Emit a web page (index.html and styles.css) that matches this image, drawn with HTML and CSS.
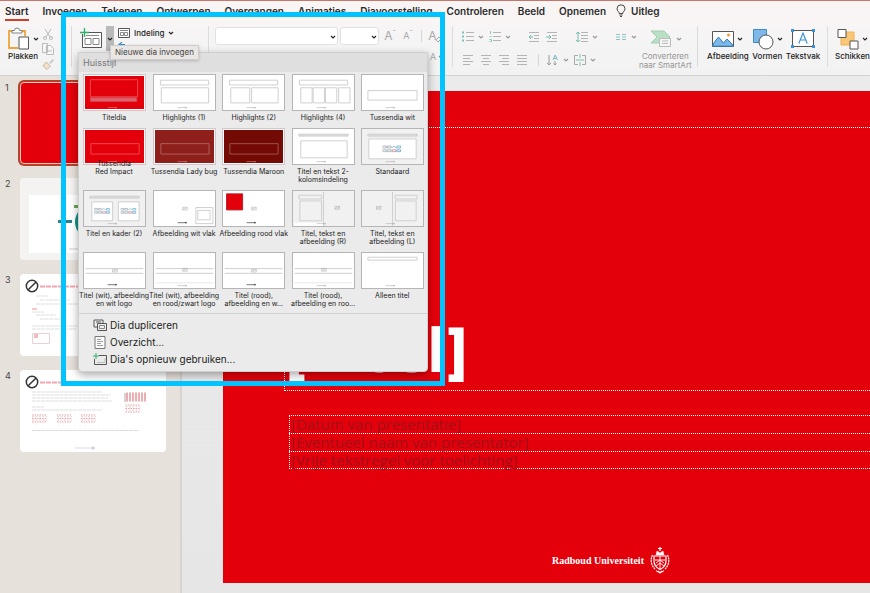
FILE: index.html
```html
<!DOCTYPE html>
<html lang="nl">
<head>
<meta charset="utf-8">
<title>Presentatie</title>
<link rel="stylesheet" href="styles.css">
</head>
<body>
<svg class="defs" aria-hidden="true">
  <symbol id="chev" viewBox="0 0 6 6"><path d="M1 2l2 2 2-2" fill="none" stroke="currentColor" stroke-width="1.1"/></symbol>
  <symbol id="foot" viewBox="0 0 12 3"><path d="M0 1.5h8" stroke="currentColor" stroke-width=".6"/><circle cx="9" cy="1.5" r=".6" fill="currentColor" stroke="currentColor" stroke-width=".4"/></symbol>
  <symbol id="pic" viewBox="0 0 6 5"><path d="M.5 1.2h5v3h-5zM.5 4l1.7-1.8 1.2 1 2-2" fill="none" stroke="#aaa" stroke-width=".6"/></symbol>
  <symbol id="cluster" viewBox="0 0 20 8"><g fill="none" stroke="#9aa6ae" stroke-width=".8"><path d="M0 1h4v2H0zM5 1h4v2H5zM0 5h4v2H0zM5 5h4v2H5z"/><path d="M10 3l2-2 2 2M15 1h4v2h-4z" stroke="#5fa7c6"/><path d="M10 5h4v2h-4z" stroke="#c0868c"/><path d="M15 5h4v2h-4z" stroke="#5b93c9"/></g></symbol>
  <symbol id="ban" viewBox="0 0 14 14"><circle cx="7" cy="7" r="5.7" fill="#fff" stroke="#333" stroke-width="1.5"/><path d="M3.2 10.8l7.6-7.6" stroke="#333" stroke-width="1.5"/></symbol>
  <symbol id="table" viewBox="0 0 15 9"><path d="M0 1h15M0 4.5h15M0 8h15" stroke="#df7d84" stroke-width="1.2" stroke-dasharray="1.5 1"/><path d="M0 2.7h15M0 6.2h15" stroke="#e9b6b9" stroke-dasharray="2 1.4"/></symbol>
</svg>

<nav class="tabs">
  <a href="#" class="active">Start</a><a href="#">Invoegen</a><a href="#">Tekenen</a><a href="#">Ontwerpen</a><a href="#">Overgangen</a><a href="#">Animaties</a><a href="#">Diavoorstelling</a><a href="#">Controleren</a><a href="#">Beeld</a><a href="#">Opnemen</a>
  <a href="#" class="tell"><svg width="10" height="14" viewBox="0 0 10 14" fill="none" stroke="#333" stroke-width=".9"><path d="M3.2 9.5C3.2 7.5 1 7 1 4.800a4 4 0 0 1 8 0C9 7 6.800 7.500 6.800 9.500zM3.400 11h3.200M4 12.500h2"/></svg>Uitleg</a>
</nav>

<div class="ribbon">
  <section class="group clipboard">
    <button class="big"><span class="pair"><svg width="23" height="24" viewBox="0 0 23 24"><path d="M6 4H2v17h9M14 4h4v5" fill="none" stroke="#eda63c" stroke-width="1.800"/><path d="M5 6V3.500h2.500a2.500 2.500 0 0 1 5 0H15V6z" fill="#fff" stroke="#777" stroke-width=".9"/><path d="M12 10h9.500v12H12z" fill="#fff" stroke="#555"/></svg><svg class="chev"><use href="#chev"/></svg></span>Plakken</button>
    <div class="stack">
      <button aria-label="Knippen"><svg width="12" height="12" viewBox="0 0 12 12" fill="none" stroke="#bbb"><path d="M3 1l5 8M9 1L4 9"/><circle cx="3" cy="10" r="1.500"/><circle cx="9" cy="10" r="1.500"/></svg></button>
      <button aria-label="Kopiëren"><svg width="12" height="12" viewBox="0 0 12 12" fill="#f6f6f6" stroke="#bbb"><path d="M.5.5h5v9h-5zM4.500 2.500h4l3 3v6h-7zM6 8h4"/></svg></button>
      <button aria-label="Opmaak kopiëren"><svg width="12" height="12" viewBox="0 0 12 12"><path d="M7 5l3.500-4L12 2.500 8.500 6z" fill="#ccc"/><path d="M4 4l4.500 4L5 11.500 1 8z" fill="#f3e0c4" stroke="#c5bdb2"/></svg></button>
    </div>
  </section>

  <section class="group slides">
    <div class="newslide">
      <button class="new-main" aria-label="Nieuwe dia"><svg width="24" height="22" viewBox="0 0 24 22"><path d="M2.500 4.500h19v15h-19z" fill="#fff" stroke="#555"/><path d="M5 7.500h14M5 10.500h6v6H5zM13 10.500h6v6h-6z" fill="none" stroke="#888"/><path d="M0 4.500h9M4.500 0v9" stroke="#f0f0f0" stroke-width="3"/><path d="M0 4.500h9M4.500 0v9" stroke="#2fb36b" stroke-width="1.300"/></svg></button><button class="new-arrow" aria-label="Nieuwe dia invoegen"><svg class="chev"><use href="#chev"/></svg></button>
      <div class="tooltip" role="tooltip">Nieuwe dia invoegen</div>
      <div class="menu">
        <h2>Huisstijl</h2>
        <div class="layouts">
          <button><svg class="thumb red" viewBox="0 0 63 37"><path d="M6 5h50v18H6z"/><path class="rose" d="M6 24h49v4H6z"/><use href="#foot" x="24" y="33" width="12" height="3"/></svg><span>Titeldia</span></button>
          <button><svg class="thumb" viewBox="0 0 63 37"><path d="M6 5.500h51v5H6zM7 13.500h50v16H7z"/><use href="#foot" x="24" y="33" width="12" height="3"/></svg><span>Highlights (1)</span></button>
          <button><svg class="thumb" viewBox="0 0 63 37"><path d="M6 5.500h51v5H6zM7.500 13.500h20v16h-20zM29.500 13.500h28v16h-28z"/><use href="#foot" x="24" y="33" width="12" height="3"/></svg><span>Highlights (2)</span></button>
          <button><svg class="thumb" viewBox="0 0 63 37"><path d="M6 5.500h51v5H6zM7.500 13.500h12v16h-12zM20.500 13.500h12v16h-12zM33.500 13.500h12v16h-12zM47.500 13.500h12v16h-12z"/><use href="#foot" x="24" y="33" width="12" height="3"/></svg><span>Highlights (4)</span></button>
          <button><svg class="thumb" viewBox="0 0 63 37"><path d="M5.500 16.500h52v10h-52z"/><use href="#foot" x="24" y="33" width="12" height="3"/></svg><span>Tussendia wit</span></button>

          <button><svg class="thumb red" viewBox="0 0 63 37"><path d="M6.500 15.500h51v11h-51z"/><use href="#foot" x="24" y="33" width="12" height="3"/></svg><span class="over">Tussendia<br>Red Impact</span></button>
          <button><svg class="thumb ladybug" viewBox="0 0 63 37"><path d="M6.500 15.500h51v11h-51z"/><use href="#foot" x="24" y="33" width="12" height="3"/></svg><span>Tussendia Lady bug</span></button>
          <button><svg class="thumb maroon" viewBox="0 0 63 37"><path d="M6.500 15.500h51v11h-51z"/><use href="#foot" x="24" y="33" width="12" height="3"/></svg><span>Tussendia Maroon</span></button>
          <button><svg class="thumb" viewBox="0 0 63 37"><path class="bar" d="M5.500 5.500h52v2h-52z"/><path d="M7.500 12.500h49v18h-49z"/><use href="#foot" x="24" y="33" width="12" height="3"/></svg><span>Titel en tekst 2-<br>kolomsindeling</span></button>
          <button><svg class="thumb soft" viewBox="0 0 63 37"><path class="bar" d="M5.500 5.500h52v2h-52z"/><path class="paper" d="M6.500 10.500h50v21h-50z"/><use href="#cluster" x="21" y="17" width="20" height="8"/><use href="#foot" x="24" y="33" width="12" height="3"/></svg><span>Standaard</span></button>

          <button><svg class="thumb soft" viewBox="0 0 63 37"><path class="bar" d="M5.500 5.500h52v2h-52z"/><path class="paper" d="M7.500 11.500h22v20h-22zM35.500 11.500h22v20h-22z"/><use href="#cluster" x="10" y="17" width="17" height="8"/><use href="#cluster" x="38" y="17" width="17" height="8"/><use href="#foot" x="24" y="33" width="12" height="3"/></svg><span>Titel en kader (2)</span></button>
          <button><svg class="thumb" viewBox="0 0 63 37"><use href="#pic" x="29" y="16" width="6" height="5"/><path d="M43.500 17.500h18v17h-18zM45.500 20.500h13v10h-13z"/><use class="ink" href="#foot" x="24" y="32" width="12" height="3"/></svg><span>Afbeelding wit vlak</span></button>
          <button><svg class="thumb" viewBox="0 0 63 37"><path class="redfill" d="M3 3h17v17H3z"/><use href="#pic" x="29" y="16" width="6" height="5"/><use class="ink" href="#foot" x="24" y="32" width="12" height="3"/></svg><span>Afbeelding rood vlak</span></button>
          <button><svg class="thumb soft" viewBox="0 0 63 37"><path class="paper" d="M.5 33.500h31V37H.5z" stroke="none"/><path d="M5.500 4.500h24v4h-24zM6.500 10.500h23v21h-23zM31.500 1v36"/><use href="#pic" x="43" y="15" width="6" height="5"/><use href="#foot" x="24" y="33" width="12" height="3"/></svg><span>Titel, tekst en<br>afbeelding (R)</span></button>
          <button><svg class="thumb soft" viewBox="0 0 63 37"><path d="M34.500 4.500h23v4h-23zM34.500 10.500h22v21h-22zM31.500 1v36"/><use href="#pic" x="14" y="15" width="6" height="5"/><use href="#foot" x="24" y="33" width="12" height="3"/></svg><span>Titel, tekst en<br>afbeelding (L)</span></button>

          <button><svg class="thumb" viewBox="0 0 63 37"><path d="M1 16.500h61M1 21.500h61"/><use href="#pic" x="29" y="16" width="6" height="5"/><use class="ink" href="#foot" x="24" y="32" width="12" height="3"/></svg><span>Titel (wit), afbeelding<br>en wit logo</span></button>
          <button><svg class="thumb" viewBox="0 0 63 37"><path d="M1 16.500h61M1 21.500h61"/><path class="faint" d="M1 31.500h61"/><use href="#pic" x="29" y="15" width="6" height="5"/><use href="#foot" x="24" y="33" width="12" height="3"/></svg><span>Titel (wit), afbeelding<br>en rood/zwart logo</span></button>
          <button><svg class="thumb" viewBox="0 0 63 37"><path d="M1 16.500h61M1 21.500h61"/><use href="#pic" x="29" y="16" width="6" height="5"/><use class="ink" href="#foot" x="24" y="32" width="12" height="3"/></svg><span>Titel (rood),<br>afbeelding en w...</span></button>
          <button><svg class="thumb" viewBox="0 0 63 37"><path d="M1 16.500h61M1 21.500h61"/><path class="faint" d="M1 31.500h61"/><use href="#pic" x="29" y="15" width="6" height="5"/><use href="#foot" x="24" y="33" width="12" height="3"/></svg><span>Titel (rood),<br>afbeelding en roo...</span></button>
          <button><svg class="thumb" viewBox="0 0 63 37"><path d="M5.500 4.500h52v3h-52z"/><use href="#foot" x="24" y="33" width="12" height="3"/></svg><span>Alleen titel</span></button>
        </div>
        <div class="commands">
          <button><svg width="14" height="13" viewBox="0 0 14 13" fill="#eee" stroke="#555"><path d="M1 1h9v7H1zM3 3h5"/><path d="M4.500 4.500h9v7h-9z"/><path d="M6.500 6.500h5v3h-5z" stroke="#888"/></svg>Dia dupliceren</button>
          <button><svg width="14" height="13" viewBox="0 0 14 13" fill="#fafafa" stroke="#777"><path d="M2 .5h10v12H2z"/><path d="M4 3.500h4M4 5.500h6M4 7.500h4M4 9.500h6" stroke="#888" stroke-width=".8"/></svg>Overzicht...</button>
          <button><svg width="14" height="13" viewBox="0 0 14 13" fill="none"><path d="M1.500 6v5.500h12v-9H6" stroke="#555"/><path d="M4 9.500h8V5" stroke="#bbb"/><path d="M0 3h6M3 0v6" stroke="#2fb36b"/></svg>Dia's opnieuw gebruiken...</button>
        </div>
      </div>
    </div>
    <div class="slide-opts">
      <button class="inline"><svg width="12" height="10" viewBox="0 0 12 10" fill="#fff" stroke="#555"><path d="M.5.500h11v9H.5z"/><path d="M2 2.500h8M2.500 4.500h3v3h-3zM6.500 4.500h3v3h-3z" stroke="#888"/></svg>Indeling<svg class="chev"><use href="#chev"/></svg></button>
      <button class="inline" aria-label="Opnieuw instellen"><svg width="12" height="10" viewBox="0 0 12 10" fill="none"><path d="M4 4.500h7.500v5h-7.500" stroke="#777"/><path d="M4 0L1 2.500 4 5M1 2.500h6" stroke="#3b8fd0" stroke-width="1.200"/></svg></button>
    </div>
  </section>

  <section class="group font">
    <div class="row">
      <span class="combo wide"><select aria-label="Lettertype"><option></option></select><svg class="chev"><use href="#chev"/></svg></span>
      <span class="combo"><select aria-label="Tekengrootte"><option></option></select><svg class="chev"><use href="#chev"/></svg></span>
      <button class="glyph lg" aria-label="Groter">A<sup>ˆ</sup></button><button class="glyph" aria-label="Kleiner">A<sup>ˇ</sup></button><i class="sep"></i><button class="glyph lg" aria-label="Opmaak wissen">A<svg width="7" height="7" viewBox="0 0 7 7" fill="none" stroke="#aaa"><path d="M1 4l3-3 2 2-3 3z"/></svg></button>
    </div>
    <div class="row end"><button class="glyph" aria-label="Tekstkleur">A</button><svg class="chev"><use href="#chev"/></svg></div>
  </section>

  <section class="group para">
    <div class="para-grid">
      <div class="row tools">
        <button aria-label="Opsommingstekens"><svg width="12" height="12" viewBox="0 0 12 12" stroke="#b4b4b4"><path d="M4 1.500h8M4 5.500h8M4 9.500h8"/><path d="M0 1.500h2M0 5.500h2M0 9.500h2" stroke="#7fc0b8" stroke-width="2"/></svg><svg class="chev"><use href="#chev"/></svg></button>
        <button aria-label="Nummering"><svg width="12" height="12" viewBox="0 0 12 12" stroke="#b4b4b4"><path d="M4 1.500h8M4 5.500h8M4 9.500h8"/><path d="M1.500 0v3M.5 5.500h2M.5 8.500h2v2h-2" stroke="#8fc8c0" fill="none"/></svg><svg class="chev"><use href="#chev"/></svg></button><i class="sep"></i>
        <button aria-label="Inspringing verkleinen"><svg width="12" height="12" viewBox="0 0 12 12" stroke="#b4b4b4" fill="none"><path d="M1 1.500h10M6 4.500h5M6 7.500h5M1 10.500h10"/><path d="M5 6H1M3 4L1 6l2 2" stroke="#72b9b2"/></svg></button>
        <button aria-label="Inspringing vergroten"><svg width="12" height="12" viewBox="0 0 12 12" stroke="#b4b4b4" fill="none"><path d="M1 1.500h10M6 4.500h5M6 7.500h5M1 10.500h10"/><path d="M0 6h4M3 4l2 2-2 2" stroke="#72b9b2"/></svg></button><i class="sep"></i>
        <button aria-label="Regelafstand"><svg width="12" height="12" viewBox="0 0 12 12" stroke="#b4b4b4" fill="none"><path d="M5 1.500h7M5 4.500h7M5 7.500h7M5 10.500h7"/><path d="M2 1v10M0 3l2-2 2 2M0 9l2 2 2-2" stroke="#72b9b2"/></svg><svg class="chev"><use href="#chev"/></svg></button><i class="sep"></i>
        <button aria-label="Kolommen"><svg width="12" height="12" viewBox="0 0 12 12" stroke="#8cc3c3"><path d="M1 3.500h4M1 6h4M1 8.500h4M7 3.500h4M7 6h4M7 8.500h4"/></svg><svg class="chev"><use href="#chev"/></svg></button>
      </div>
      <div class="row tools">
        <button aria-label="Links"><svg width="12" height="12" viewBox="0 0 12 12" stroke="#b4b4b4"><path d="M1 1.500h10M1 4.500h7M1 7.500h10M1 10.500h7"/></svg></button>
        <button aria-label="Centreren"><svg width="12" height="12" viewBox="0 0 12 12" stroke="#b4b4b4"><path d="M1 1.500h10M3 4.500h6M1 7.500h10M3 10.500h6"/></svg></button>
        <button aria-label="Rechts"><svg width="12" height="12" viewBox="0 0 12 12" stroke="#b4b4b4"><path d="M1 1.500h10M4 4.500h7M1 7.500h10M4 10.500h7"/></svg></button>
        <button aria-label="Uitvullen"><svg width="12" height="12" viewBox="0 0 12 12" stroke="#b4b4b4"><path d="M1 1.500h10M1 4.500h10M1 7.500h10M1 10.500h10"/></svg></button><i class="sep"></i>
        <button aria-label="Tekstrichting"><svg width="12" height="12" viewBox="0 0 12 12" stroke="#999" fill="none"><path d="M2 1v10M0 9l2 2 2-2M8 7v4M6.500 9.500L8 11l1.500-1.500"/><path d="M6 6l2.200-5L10.500 6M7 4.500h2.500" stroke="#82b8c4"/></svg><svg class="chev"><use href="#chev"/></svg></button>
        <button aria-label="Tekst uitlijnen"><svg width="12" height="12" viewBox="0 0 12 12" stroke="#aaa" fill="none"><path d="M4 1.500H.5v9H4M8 1.500h3.500v9H8"/><path d="M2 6h8M6 0v4M6 8v4" stroke="#82c0ac"/></svg><svg class="chev"><use href="#chev"/></svg></button>
      </div>
    </div>
    <button class="big muted"><span class="pair"><svg width="24" height="22" viewBox="0 0 24 22"><path d="M2 3h13l6 6-6 6H2l6-6z" fill="#b9dfc6" stroke="#9fcfae"/><path d="M10.500 10.500h11v8h-11z" fill="#f6f6f6" stroke="#bbb"/><path d="M13 13h6M13 15.500h6" stroke="#bbb"/></svg><svg class="chev"><use href="#chev"/></svg></span>Converteren<br>naar SmartArt</button>
  </section>

  <section class="group insert">
    <button class="big"><span class="pair"><svg width="22" height="22" viewBox="0 0 22 22"><path d="M.5 3.500h21v15H.5z" fill="#fff" stroke="#555"/><path d="M1 16l5.500-7 5 6 3.500-4 6 6v1.200H1z" fill="#7db8e8" stroke="#2f7dbd"/><circle cx="16.500" cy="7" r="1.500" fill="#f09a3e"/></svg><svg class="chev"><use href="#chev"/></svg></span>Afbeelding</button>
    <button class="big"><span class="pair"><svg width="22" height="22" viewBox="0 0 22 22"><path d="M1.500 1.500h13v13h-13z" fill="#7db8e8" stroke="#3b8bd0"/><circle cx="14" cy="14" r="7" fill="#fff" stroke="#555"/></svg><svg class="chev"><use href="#chev"/></svg></span>Vormen</button>
    <button class="big"><span class="pair"><svg width="24" height="22" viewBox="0 0 24 22"><path d="M1.500 2.500h21v16h-21z" fill="#fff" stroke="#555"/><path d="M7.800 15.500L12 5l4.200 10.500M9.300 12h5.400" fill="none" stroke="#3b93d6" stroke-width="1.200"/><path d="M0 1h3v3H0zM21 1h3v3h-3zM0 17h3v3H0zM21 17h3v3h-3z" fill="#3b93d6"/></svg></span>Tekstvak</button>
  </section>

  <section class="group arrange">
    <button class="big"><span class="pair"><svg width="22" height="22" viewBox="0 0 22 22"><path d="M4 4h13v13H4z" fill="#f8c878" stroke="#efb04f"/><path d="M1 1.500h8v8H1zM13 13h8v8h-8z" fill="#fff" stroke="#555"/></svg><svg class="chev"><use href="#chev"/></svg></span>Schikken</button>
  </section>
</div>

<main class="workspace">
  <aside class="panel">
    <div class="item"><b>1</b><div class="mini selected"></div></div>
    <div class="item"><b>2</b><svg class="mini gray" viewBox="0 0 146 82"><path d="M9 17h120v58H9z" fill="#fff"/><path d="M54 27h14v3H54z" fill="#68a84e"/><path d="M38 42h14v3H38z" fill="#26848a"/><circle cx="72" cy="44" r="17" fill="#138f85"/><path d="M49 71h30" stroke="#ccc"/></svg></div>
    <div class="item"><b>3</b><svg class="mini" viewBox="0 0 146 82"><g class="faded"><path d="M20 12.500h60" stroke="#ee8088" stroke-width="2" stroke-dasharray="5 1"/><path d="M16 22h12M20 26h30M16 30h48M12 38h12M16 41h20M20 45h24M12 52h56M12 55h44" stroke="#d2d2d2" stroke-dasharray="4 .6"/><path d="M12 35h5" stroke="#e66"/><path d="M12.500 59.500h17v10h-17z" fill="none" stroke="#e3bcc0"/><path d="M14 60h4v4h-4z" fill="#e9a0a5"/></g><use href="#ban" x="5" y="5" width="14" height="14"/></svg></div>
    <div class="item"><b>4</b><svg class="mini" viewBox="0 0 146 82"><g class="faded"><path d="M20 12.500h34" stroke="#ee8088" stroke-width="2" stroke-dasharray="5 1"/><path d="M12 22h70M12 25h79M12 28h76M12 31h80M12 37h12M12 40h70M12 60.500h107" stroke="#cfcfcf" stroke-dasharray="4 .6"/><use href="#table" x="12" y="44" width="15" height="9"/><use href="#table" x="37" y="44" width="15" height="9"/><use href="#table" x="61" y="44" width="15" height="9"/><path d="M106 27h20" stroke="#e28a90" stroke-width="9" stroke-dasharray="2 1"/><path d="M105 23v9" stroke="#888"/><use href="#table" x="103" y="34" width="20" height="9"/><path d="M55 78h20" stroke="#aaa" stroke-width=".6"/><circle cx="73" cy="78" r="1.500" fill="#bbb"/></g><use href="#ban" x="5" y="5" width="14" height="14"/></svg></div>
  </aside>
  <div class="canvas">
    <div class="slide">
      <h1>[Titel]</h1>
      <div class="subs"><p>[Datum van presentatie]</p><p>[Eventueel naam van presentator]</p><p>[Vrije tekstregel voor toelichting]</p></div>
      <footer>Radboud Universiteit<svg width="20" height="28" viewBox="0 0 20 28" fill="none" stroke="#fff"><path d="M10 1v4M8 2.500h4" stroke-width="1.200"/><path d="M6 9l1-4 3 2 3-2 1 4z" fill="#fff" stroke-width=".5"/><path d="M4 10h12v5c0 4-3 7-6 8.500C7 22 4 19 4 15z" stroke-width="1.200"/><path d="M10 10v13M4.500 14h11M6 17l4-3 4 3M6 20l4-3 4 3" stroke-width=".9"/><path d="M2.500 9C.5 13 .500 19 5 23M17.500 9c2 4 2 10-2.500 14" stroke-width="1.300" stroke-dasharray="2 .7"/><path d="M6 24.500c2 2.500 6 2.500 8 0M8 25l2 2 2-2" stroke-width="1.100"/></svg></footer>
    </div>
  </div>
</main>
<div class="highlight"></div>
</body>
</html>
```

FILE: styles.css
```css
* { box-sizing: border-box; }
body {
  margin: 0;
  height: 100vh;
  overflow: hidden;
  display: flex;
  flex-direction: column;
  position: relative;
  background: #e8e8e8;
  color: #222;
  font-family: Inter, "Liberation Sans", sans-serif;
  font-size: 8px;
}
.defs { position: absolute; width: 0; height: 0; }
svg { display: block; flex: none; }
button {
  border: 0;
  margin: 0;
  padding: 0;
  background: none;
  color: inherit;
  font: inherit;
}
.chev { width: 6px; height: 6px; }

.tabs {
  display: flex;
  gap: 14px;
  height: 24px;
  flex: none;
  padding-left: 5px;
  border-top: 1px solid #c5786a;
  background: #f8f5f4;
  font-size: 10px;
  font-weight: 600;
  line-height: 20px;
  white-space: nowrap;
}
.tabs a { color: #2b2b2b; text-decoration: none; }
.tabs .active { height: 20px; border-bottom: 2px solid #c8432c; }
.tabs .tell { display: flex; align-items: center; gap: 5px; height: 20px; margin-left: -4px; }

.ribbon {
  display: flex;
  flex: none;
  height: 52px;
  background: linear-gradient(#f7f5f5, #f2f2f2);
  border-bottom: 1px solid #d2d2d2;
}
.group { position: relative; display: flex; flex: none; padding-top: 2px; }
.group::after {
  content: "";
  position: absolute;
  right: 0;
  top: 2px;
  bottom: 8px;
  width: 1px;
  background: #dcdcdc;
}
.arrange::after { display: none; }
.clipboard { width: 72px; padding-left: 7px; gap: 3px; }
.slides { width: 137px; padding-left: 8px; gap: 4px; }
.font { width: 244px; padding-left: 6px; flex-direction: column; }
.para { width: 245px; padding-left: 9px; }
.insert { width: 130px; padding-left: 9px; gap: 3px; }
.arrange { padding-left: 7px; }

.big {
  display: flex;
  flex-direction: column;
  align-items: center;
  font-weight: 500;
  line-height: 9px;
  white-space: nowrap;
}
.pair { display: flex; align-items: center; gap: 3px; height: 26px; }
.muted { color: #949494; font-weight: 400; }
.stack { display: flex; flex-direction: column; gap: 3px; padding-top: 2px; }

.newslide { position: relative; display: flex; align-self: flex-start; height: 25px; }
.new-main { width: 26px; }
.new-arrow { width: 8px; display: grid; place-items: center; background: #b9b9b9; }
.slide-opts { display: flex; flex-direction: column; gap: 4px; padding-top: 2px; }
.inline { display: flex; align-items: center; gap: 4px; line-height: 10px; font-weight: 500; }

.tooltip {
  position: absolute;
  z-index: 3;
  left: 30px;
  top: 19px;
  padding: 0 4px;
  border: 1px solid #cfcdcb;
  background: #e9e6e3;
  box-shadow: 0 1px 3px #0003;
  color: #444;
  font-size: 8px;
  line-height: 13px;
  white-space: nowrap;
}
.menu {
  position: absolute;
  z-index: 2;
  left: -2px;
  top: 26px;
  width: 350px;
  padding-bottom: 3px;
  border: 1px solid #cfcfcf;
  border-radius: 0 0 4px 4px;
  background: #ebebeb;
  box-shadow: 0 3px 8px #0005;
}
.menu h2 {
  margin: 0;
  padding: 2px 4px 0;
  height: 19px;
  background: #dfdfdf;
  color: #777;
  font-size: 9px;
  font-weight: 400;
  line-height: 16px;
}
.layouts {
  display: grid;
  grid-template-columns: repeat(5, 1fr);
  row-gap: 6px;
  padding: 2px 0 5px;
  font-size: 7px;
  line-height: 8px;
}
.layouts button { display: flex; flex-direction: column; align-items: center; gap: 3px; white-space: nowrap; }
.layouts span { position: relative; }
.layouts .over { margin-top: -8px; }
.thumb {
  width: 63px;
  height: 37px;
  border: 1px solid #b5b5b5;
  background: #fff;
  fill: none;
  stroke: #cdcdcd;
  stroke-width: 1;
  color: #aaa;
}
.thumb.soft { background: #f1f1f1; }
.thumb .paper { fill: #fff; }
.thumb .bar { fill: #ddd; }
.thumb .faint { stroke: #e8e8e8; }
.thumb .ink { color: #111; }
.thumb .redfill { fill: #e3000b; stroke: #b92028; }
.thumb .rose { fill: #dc626b; stroke: #d9444f; }
.thumb.red, .thumb.ladybug, .thumb.maroon { border-color: #d8c4c4; box-shadow: inset 0 0 0 1px #fff; color: #e88; }
.thumb.red { background: #e3000b; stroke: #ec4a52; }
.thumb.ladybug { background: #8e1f1b; stroke: #b0625e; }
.thumb.maroon { background: #730b04; stroke: #a0544f; }

.commands { padding-top: 3px; border-top: 1px solid #cfcfcf; }
.commands button {
  display: flex;
  align-items: center;
  gap: 3px;
  padding-left: 14px;
  font-size: 10px;
  line-height: 17px;
}

.row { display: flex; align-items: center; }
.row.end { justify-content: flex-end; padding-right: 9px; height: 24px; color: #888; }
.combo { position: relative; width: 39px; height: 18px; margin: 1px 2px 0 0; }
.combo.wide { width: 123px; }
.combo select {
  appearance: none;
  width: 100%;
  height: 100%;
  border: 1px solid #e2e2e2;
  border-radius: 3px;
  background: #fff;
}
.combo .chev { position: absolute; right: 2px; top: 7px; }
.glyph { display: flex; width: 18px; justify-content: center; color: #a8a8a8; font-size: 9px; line-height: 14px; }
.glyph.lg { font-size: 12px; }
.glyph sup { font-size: 8px; line-height: 8px; }
.glyph svg { align-self: flex-end; margin-left: -2px; }
.row.end .glyph { width: 10px; }
.sep { width: 1px; height: 12px; background: #d5d5d5; margin: 0 8px 0 4px; }
.font .sep { margin: 0 4px; }
.para-grid { display: flex; flex-direction: column; gap: 11px; padding-top: 5px; width: 177px; color: #999; }
.tools { height: 12px; }
.tools button { display: flex; align-items: center; gap: 4px; margin-right: 6px; }
.tools button:has(.chev) { margin-right: 5px; }

.workspace { flex: 1; display: flex; min-height: 0; }
.panel {
  flex: none;
  width: 182px;
  padding: 6px 0 0 5px;
  background: #e7e1db;
  border-right: 2px solid #d6d3d0;
  display: flex;
  flex-direction: column;
  gap: 14px;
}
.item { display: flex; }
.item b { width: 15px; font-size: 9px; font-weight: 400; line-height: 12px; color: #444; }
.mini { width: 146px; height: 82px; border-radius: 4px; background: #fff; }
.mini.gray { background: #f4f3f2; }
.mini.selected { background: #e3000b; border: 1px solid #f5c6ba; box-shadow: 0 0 0 2px #b1452c; }
.faded { opacity: .7; }

.canvas { flex: 1; min-width: 0; padding: 15px 0 10px 41px; background: linear-gradient(#ebebeb, #e6e6e6); }
.slide {
  height: 100%;
  display: flex;
  flex-direction: column;
  background: #e3000b;
  color: #fff;
  padding: 36px 0 9px 61px;
  font-family: "Open Sans", "Noto Sans", sans-serif;
}
.slide h1 {
  margin: 0;
  height: 264px;
  padding: 0 0 9px 1px;
  display: flex;
  align-items: flex-end;
  border: 1px dotted #fff;
  border-right: 0;
  font-size: 61px;
  font-weight: 800;
  line-height: 64px;
}
.subs { margin: 24px 0 0 5px; }
.subs p {
  margin: 0;
  height: 18px;
  border: 1px dotted #fff;
  border-right: 0;
  border-bottom-width: 0;
  padding-left: 1px;
  color: #a40f17;
  font-size: 15px;
  line-height: 17px;
}
.subs p:last-child { border-bottom-width: 1px; }
.slide footer {
  display: flex;
  align-items: center;
  justify-content: center;
  gap: 6px;
  margin-top: auto;
  padding-left: 68px;
  font-family: "Liberation Serif", serif;
  font-size: 10px;
  font-weight: 700;
}
.highlight {
  position: absolute;
  z-index: 5;
  left: 61px;
  top: 12px;
  width: 384px;
  height: 374px;
  border: 5px solid #00c3ff;
  pointer-events: none;
}
```
